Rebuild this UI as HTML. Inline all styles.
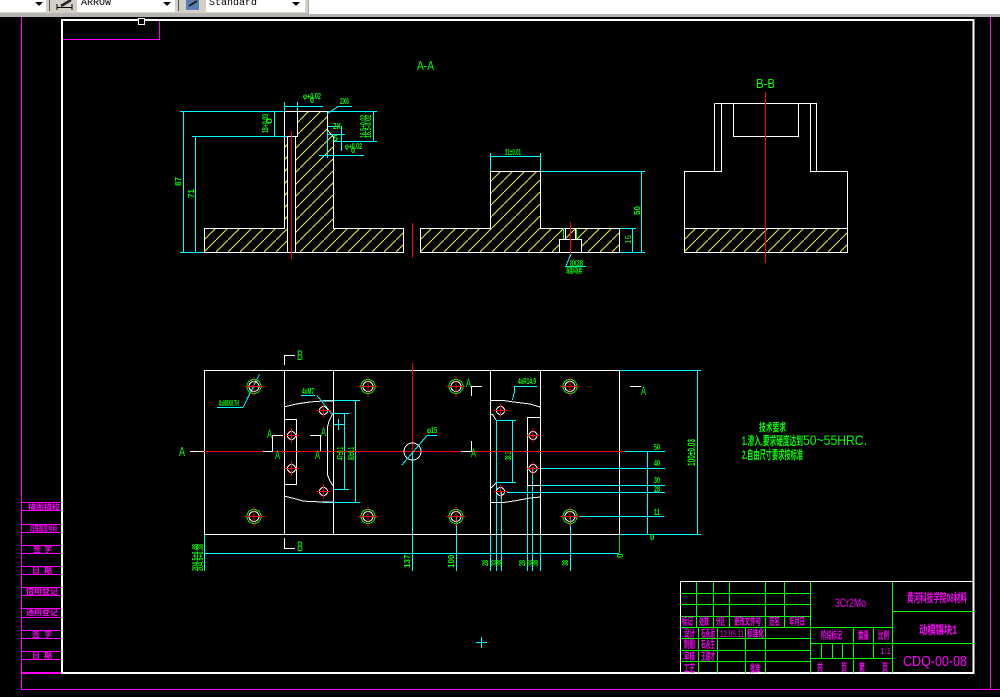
<!DOCTYPE html>
<html>
<head>
<meta charset="utf-8">
<style>
html,body{margin:0;padding:0;background:#000;width:1000px;height:697px;overflow:hidden}
svg{position:absolute;left:0;top:0;display:block}
text{font-family:"Liberation Sans","Noto Sans CJK SC",sans-serif}
.g{fill:#00ff00;font-size:11px}
.gs{fill:#00ff00;font-size:8px;font-weight:bold}
.m{fill:#ff00ff;font-size:10px;font-weight:bold}
.s{fill:#ff00ff;font-size:8px;font-weight:bold}
.mono{font-family:"Liberation Mono",monospace;font-size:10px;fill:#000}
</style>
</head>
<body>
<svg width="1000" height="697" viewBox="0 0 1000 697" xmlns="http://www.w3.org/2000/svg">
<defs>
<pattern id="h" width="12" height="12" patternUnits="userSpaceOnUse">
<path d="M0 12L12 0" stroke="#f0f040" stroke-width="1" fill="none"/>
</pattern>
<g id="big" shape-rendering="crispEdges">
<circle r="7" fill="none" stroke="#00ff00"/>
<circle r="5" fill="none" stroke="#fff"/>
<path d="M-9.500 0H9.500M0-9.500V9.500" stroke="#ff0000" fill="none"/>
</g>
<g id="small" shape-rendering="crispEdges">
<circle r="4" fill="none" stroke="#fff"/>
<path d="M-7 0H7M0-7V7" stroke="#ff0000" fill="none"/>
</g>
</defs>

<rect width="1000" height="697" fill="#000"/>

<!-- toolbar -->
<rect x="0" y="0" width="1000" height="14" fill="#fff"/>
<rect x="0" y="0" width="308" height="13" fill="#d4d0c8"/>
<rect x="308" y="0" width="1" height="14" fill="#a8a8a8"/>
<rect x="0" y="13" width="308" height="1" fill="#b8b8b0"/>
<rect x="0" y="14" width="1000" height="3" fill="#b4b4b4"/>
<rect x="0" y="0" width="46" height="12" fill="#fff"/>
<rect x="77" y="0" width="98" height="12" fill="#fff"/>
<rect x="206" y="0" width="99" height="12" fill="#fff"/>
<path d="M35 2h8l-4 4z M163 2h8l-4 4z M292 2h8l-4 4z" fill="#000"/>
<rect x="49" y="0" width="1" height="11" fill="#555"/>
<rect x="178" y="0" width="1" height="11" fill="#555"/>
<path d="M57 4V10M72 4V10M57 7.500H72" stroke="#000" fill="none" shape-rendering="crispEdges"/>
<path d="M61 6L71 0" stroke="#222" stroke-width="2.500" fill="none"/>
<rect x="186" y="0" width="13" height="10" fill="#5a7fb5"/>
<path d="M189 6L197 1" stroke="#222" stroke-width="2" fill="none"/>
<text x="81" y="5" class="mono">ARROW</text>
<text x="209" y="5" class="mono">Standard</text>

<g shape-rendering="crispEdges" fill="none">
<!-- magenta outer -->
<path d="M21.500 17V689.500H1000M990.500 17V689.500M62 39.500H159.500V20" stroke="#ff00ff"/>
<path d="M22 502.500H62M22 510.500H62M22 524.500H62M22 532.500H62M22 545.500H62M22 553.500H62M22 566.500H62M22 574.500H62M22 587.500H62M22 595.500H62M22 608.500H62M22 617.500H62M22 630.500H62M22 638.500H62M22 651.500H62M22 659.500H62" stroke="#ff00ff"/>
<rect x="22" y="672" width="40" height="2" fill="#ff00ff"/>

<!-- white frame -->
<rect x="62" y="20" width="911.500" height="653" stroke="#fff" stroke-width="2"/>
<rect x="138.500" y="18.500" width="6" height="6" stroke="#fff" fill="#000"/>

<!-- hatches -->
<path d="M204 228H284V136H287V252H204Z" fill="url(#h)"/>
<path d="M297 111H327L327 130L333 135V228H403V252H295V136H297Z" fill="url(#h)"/>
<path d="M420 228H490V171H540V228H619V252H581V239H559V252H420Z" fill="url(#h)"/>
<rect x="684" y="228" width="163" height="24" fill="url(#h)"/>

<!-- A-A section: cyan -->
<path d="M180 111.500H377M192 136.500H290M183.500 111V252M195.500 136V252M180 252.500H290M284.500 102V111M297.500 102V111M284 106.500H323M338 106.500H352M274.500 111V136M327.500 126V158M327 126.500H340M327 134.500H345M341.500 126V151M333 141.500H377M373.500 111V141M319 155.500H364" stroke="#00ffff"/>
<path d="M490.500 153V171M540.500 153V171M490 156.500H541M540 171.500H645M641.500 171V252M610 228.500H636M632.500 228V252M540 252.500H645M565 266.500H586" stroke="#00ffff"/>

<!-- A-A section: white -->
<path d="M284.500 111.500V228.500H204.500V252.500H403.500V228.500H333.500V137L327.500 130V111.500H284.500M287.500 136.500V252M287 136.500H297.500V111.500M295.500 136.500V252" stroke="#fff"/>
<path d="M420.500 252.500V228.500H490.500V171.500H540.500V228.500H619.500V252.500H420.500M559.500 252V239.500H581.500V252M565.500 228V239M575.500 228V239" stroke="#fff"/>
<path d="M563.500 228V239M576.500 228V239" stroke="#00ff00"/>
<path d="M291.500 131V259M412.500 223V258M570.500 222V257" stroke="#ff0000"/>

<!-- B-B -->
<path d="M714.500 103.500H816.500V171.500H847.500V252.500H684.500V171.500H714.500V103.500M721.500 103V171.500H714M810.500 103V171.500H817M684 228.500H848M733.500 103V136.500H798.500V103" stroke="#fff"/>
<path d="M765.500 92V263" stroke="#ff0000"/>

<!-- plan view: cyan -->
<path d="M204.500 534V571M412.500 452V571M456.500 516V571M490.500 534V571M496.500 420V571M501.500 492V571M527.500 485V571M532.500 468V571M540.500 534V571M570.500 516V571M204 553.500H619" stroke="#00ffff"/>
<path d="M323 400.500H360M323 502.500H360M355.500 401V502M333 413.500H349M333 489.500H349M344.500 413V489M338.500 419V430M333 424.500H344" stroke="#00ffff"/>
<path d="M496 420.500H516M496 482.500H516M512.500 420V482" stroke="#00ffff"/>
<path d="M625 451.500H665M540 468.500H665M540 485.500H665M507 492.500H665M577 516.500H664M647.500 451V534M619 370.500H701M619 534.500H701M697.500 370V534" stroke="#00ffff"/>
<path d="M217 407.500H243M301 395.500H315M514 386.500H537M514.500 386V393M427 435.500H437" stroke="#00ffff"/>
<path d="M619.500 534V553" stroke="#00e000"/>

<!-- plan view: white -->
<rect x="204.500" y="370.500" width="415" height="164" stroke="#fff"/>
<path d="M284.500 370V534M333.500 370V534M490.500 370V534M540.500 370V534" stroke="#fff"/>
<path d="M284.500 419.500H296.500V484.500H284.500M527.500 417.500H540M527.500 417V485M527 485.500H540" stroke="#fff"/>
<path d="M284.500 365V355.500H295M284.500 538V548.500H295M190 451.500H204M263 451.500H272.500V435.500H283M310 435.500H320.500V451.500H331M461 451.500H471.500V441M471.500 396V386.500H482M630 386.500H641" stroke="#fff"/>
<path d="M204 451.500H263M273 451.500H461M472 451.500H625M412.500 363V451" stroke="#ff0000"/>
</g>

<!-- slanted lines & curves -->
<g fill="none" stroke="#fff" shape-rendering="crispEdges">
<path d="M284 407L296 404L303 403L310 402L323 401H333"/>
<path d="M284 496L296 499L303 501L310 501.500L323 502H333"/>
<path d="M333 413L329 421L327.500 427V475L330 481L333 486"/>
<path d="M490 400.500H503L514 402L522 403L530 404L540 407"/>
<path d="M490 502.500H503L514 501L522 499.500L530 498L540 497"/>
<path d="M490 414L493 415L496 420M496 483L490 489"/>
<circle cx="412.500" cy="451.500" r="8.500"/>
</g>
<g fill="none" stroke="#00ffff" shape-rendering="crispEdges">
<path d="M243 407.500L259.500 374"/>
<path d="M317 395.500L332 414"/>
<path d="M427 435.500L402 465"/>
<path d="M514 393L512.500 400"/>
<path d="M338 106.500L327 114"/>
<path d="M571 254L566 266"/>
</g>

<use href="#big" x="254" y="386.500"/>
<use href="#big" x="368" y="386.500"/>
<use href="#big" x="456" y="386.500"/>
<use href="#big" x="570" y="386.500"/>
<use href="#big" x="254" y="516.500"/>
<use href="#big" x="368" y="516.500"/>
<use href="#big" x="456" y="516.500"/>
<use href="#big" x="570" y="516.500"/>
<use href="#small" x="291.500" y="435.500"/>
<use href="#small" x="291.500" y="468.500"/>
<use href="#small" x="323.500" y="410.500"/>
<use href="#small" x="323.500" y="491.500"/>
<use href="#small" x="500.500" y="410.500"/>
<use href="#small" x="500.500" y="491.500"/>
<use href="#small" x="533" y="435.500"/>
<use href="#small" x="533" y="468.500"/>

<!-- title block lines -->
<g shape-rendering="crispEdges" fill="none">
<path d="M681 593.500H810M681 604.500H810M681 616.500H810M681 627.500H892M681 638.500H810M681 650.500H810M681 661.500H810M810 643.500H974M810 658.500H892M892 611.500H974M892 643.500H974" stroke="#00ff00"/>
<path d="M696.500 582V627M713.500 582V627M729.500 582V627M765.500 582V673M784.500 582V627M810.500 582V673M892.500 582V673M698.500 627V673M717.500 627V673M745.500 627V673M853.500 627V673M873.500 627V658M821.500 643V658M832.500 643V658M842.500 643V658" stroke="#00ff00"/>
<path d="M680.500 673V581.500H974" stroke="#fff"/>
<path d="M481.500 637V648M476 642.500H487" stroke="#00ffff"/>
</g>

<!-- green labels -->
<text x="417" y="70" class="g" style="font-size:13px" textLength="17" lengthAdjust="spacingAndGlyphs">A-A</text>
<text x="756" y="88" class="g" style="font-size:13px" textLength="19" lengthAdjust="spacingAndGlyphs">B-B</text>
<text x="297" y="360" class="g" style="font-size:14px" textLength="6" lengthAdjust="spacingAndGlyphs">B</text>
<text x="297" y="551" class="g" style="font-size:14px" textLength="6" lengthAdjust="spacingAndGlyphs">B</text>
<text x="179" y="456" class="g" style="font-size:13px" textLength="6" lengthAdjust="spacingAndGlyphs">A</text>
<text x="267" y="438" class="g" style="font-size:12px" textLength="5" lengthAdjust="spacingAndGlyphs">A</text>
<text x="321" y="436" class="g" style="font-size:12px" textLength="5" lengthAdjust="spacingAndGlyphs">A</text>
<text x="275" y="459" class="g" style="font-size:12px" textLength="5" lengthAdjust="spacingAndGlyphs">A</text>
<text x="315" y="459" class="g" style="font-size:12px" textLength="5" lengthAdjust="spacingAndGlyphs">A</text>
<text x="466" y="387" class="g" style="font-size:12px" textLength="5" lengthAdjust="spacingAndGlyphs">A</text>
<text x="641" y="395" class="g" style="font-size:12px" textLength="5" lengthAdjust="spacingAndGlyphs">A</text>
<text x="471" y="457" class="g" style="font-size:12px" textLength="5" lengthAdjust="spacingAndGlyphs">A</text>

<!-- A-A dims -->
<text x="303" y="99" class="gs" textLength="18" lengthAdjust="spacingAndGlyphs">φ+0.02</text>
<text x="310" y="103" class="gs" textLength="4" lengthAdjust="spacingAndGlyphs">0</text>
<text x="340" y="104" class="gs" textLength="9" lengthAdjust="spacingAndGlyphs">2X6</text>
<text x="333" y="129" class="gs" textLength="8" lengthAdjust="spacingAndGlyphs">2X</text>
<text x="333" y="141" class="gs" textLength="5" lengthAdjust="spacingAndGlyphs">5</text>
<text x="345" y="149" class="gs" textLength="17" lengthAdjust="spacingAndGlyphs">φ+0.02</text>
<text x="351" y="153" class="gs" textLength="4" lengthAdjust="spacingAndGlyphs">0</text>
<text x="505" y="155" class="gs" textLength="16" lengthAdjust="spacingAndGlyphs">31±0.01</text>
<text transform="translate(181,186) rotate(-90)" class="gs">87</text>
<text transform="translate(194,198) rotate(-90)" class="gs">71</text>
<text transform="translate(268,133) rotate(-90)" class="gs" textLength="19" lengthAdjust="spacingAndGlyphs">18+0.03</text>
<text transform="translate(272,124) rotate(-90)" class="gs" textLength="6" lengthAdjust="spacingAndGlyphs">0</text>
<text transform="translate(366,138) rotate(-90)" class="gs" textLength="23" lengthAdjust="spacingAndGlyphs">16.5+0.02</text>
<text transform="translate(371,138) rotate(-90)" class="gs" textLength="23" lengthAdjust="spacingAndGlyphs">16.5-0.02</text>
<text transform="translate(640,215) rotate(-90)" class="gs">50</text>
<text transform="translate(631,244) rotate(-90)" class="g" style="font-size:8px">15</text>
<text x="570" y="266" class="gs" textLength="13" lengthAdjust="spacingAndGlyphs">8X38</text>
<text x="566" y="273" class="gs" textLength="16" lengthAdjust="spacingAndGlyphs">深度6攻丝</text>

<!-- plan dims -->
<text x="219" y="406" class="gs" textLength="20" lengthAdjust="spacingAndGlyphs">8xM8X0.7H</text>
<text x="302" y="394" class="gs" textLength="12" lengthAdjust="spacingAndGlyphs">4xM7</text>
<text x="427" y="433" class="gs" textLength="10" lengthAdjust="spacingAndGlyphs">φ15</text>
<text x="518" y="384" class="gs" textLength="18" lengthAdjust="spacingAndGlyphs">4xR14.9</text>
<text transform="translate(343,460) rotate(-90)" class="gs" textLength="13" lengthAdjust="spacingAndGlyphs">47±0.1</text>
<text transform="translate(354,460) rotate(-90)" class="gs" textLength="13" lengthAdjust="spacingAndGlyphs">80±0.1</text>
<text transform="translate(511,460) rotate(-90)" class="gs" textLength="8" lengthAdjust="spacingAndGlyphs">38.1</text>
<text x="654" y="450" class="gs" textLength="6" lengthAdjust="spacingAndGlyphs">50</text>
<text x="654" y="466" class="gs" textLength="6" lengthAdjust="spacingAndGlyphs">40</text>
<text x="654" y="483" class="gs" textLength="6" lengthAdjust="spacingAndGlyphs">30</text>
<text x="654" y="492" class="gs" textLength="6" lengthAdjust="spacingAndGlyphs">28</text>
<text x="654" y="515" class="gs" textLength="6" lengthAdjust="spacingAndGlyphs">11</text>
<text x="650" y="540" class="gs">0</text>
<text transform="translate(695,466) rotate(-90)" class="g" style="font-weight:bold;font-size:11px" textLength="27" lengthAdjust="spacingAndGlyphs">100±0.03</text>
<text transform="translate(198,571) rotate(-90)" class="gs" textLength="27" lengthAdjust="spacingAndGlyphs">204.5±0.48</text>
<text transform="translate(203,571) rotate(-90)" class="gs" textLength="27" lengthAdjust="spacingAndGlyphs">204.5+0.38</text>
<text transform="translate(410,568) rotate(-90)" class="gs">137</text>
<text transform="translate(454,568) rotate(-90)" class="gs">100</text>
<text transform="translate(488,566) rotate(-90)" class="gs" textLength="6" lengthAdjust="spacingAndGlyphs">28</text>
<text transform="translate(497,566) rotate(-90)" class="gs" textLength="6" lengthAdjust="spacingAndGlyphs">33</text>
<text transform="translate(502,566) rotate(-90)" class="gs" textLength="6" lengthAdjust="spacingAndGlyphs">38</text>
<text transform="translate(525,566) rotate(-90)" class="gs" textLength="6" lengthAdjust="spacingAndGlyphs">28</text>
<text transform="translate(533,566) rotate(-90)" class="gs" textLength="6" lengthAdjust="spacingAndGlyphs">33</text>
<text transform="translate(538,566) rotate(-90)" class="gs" textLength="6" lengthAdjust="spacingAndGlyphs">38</text>
<text transform="translate(568,566) rotate(-90)" class="gs" textLength="6" lengthAdjust="spacingAndGlyphs">38</text>
<text transform="translate(623,558) rotate(-90)" class="gs">0</text>

<!-- tech note -->
<text x="759" y="431" class="g" style="font-size:11px;font-weight:bold" textLength="27" lengthAdjust="spacingAndGlyphs">技术要求</text>
<text x="742" y="445" class="g" style="font-size:12px;font-weight:bold" textLength="61" lengthAdjust="spacingAndGlyphs">1.渗入,要求硬度达到</text>
<text x="803" y="445" class="g" style="font-size:14px" textLength="64" lengthAdjust="spacingAndGlyphs">50~55HRC.</text>
<text x="742" y="459" class="g" style="font-size:12px;font-weight:bold" textLength="61" lengthAdjust="spacingAndGlyphs">2.自由尺寸要求按标准</text>

<!-- title block text -->
<text x="835" y="607" fill="#ff00ff" style="font-size:12px" textLength="31" lengthAdjust="spacingAndGlyphs">3Cr2Mo</text>
<text x="907" y="602" class="m" style="font-size:12px" textLength="60" lengthAdjust="spacingAndGlyphs">黄河科技学院08材料</text>
<text x="919" y="634" class="m" style="font-size:12px" textLength="38" lengthAdjust="spacingAndGlyphs">动模镶块1</text>
<text x="903" y="666" fill="#ff00ff" style="font-size:15px" textLength="64" lengthAdjust="spacingAndGlyphs">CDQ-00-08</text>

<text x="682" y="625" class="m" textLength="11" lengthAdjust="spacingAndGlyphs">标记</text>
<text x="699" y="625" class="m" textLength="10" lengthAdjust="spacingAndGlyphs">处数</text>
<text x="716" y="625" class="m" textLength="9" lengthAdjust="spacingAndGlyphs">分区</text>
<text x="734" y="625" class="m" textLength="27" lengthAdjust="spacingAndGlyphs">更改文件号</text>
<text x="769" y="625" class="m" textLength="11" lengthAdjust="spacingAndGlyphs">签名</text>
<text x="789" y="625" class="m" textLength="16" lengthAdjust="spacingAndGlyphs">年月日</text>

<text x="684" y="637" class="m" textLength="11" lengthAdjust="spacingAndGlyphs">设计</text>
<text x="701" y="637" class="m" textLength="14" lengthAdjust="spacingAndGlyphs">石永运</text>
<text x="720" y="637" fill="#ff00ff" style="font-size:9px" textLength="24" lengthAdjust="spacingAndGlyphs">12.05.11</text>
<text x="747" y="637" class="m" textLength="17" lengthAdjust="spacingAndGlyphs">标准化</text>
<text x="684" y="648" class="m" textLength="11" lengthAdjust="spacingAndGlyphs">制图</text>
<text x="701" y="648" class="m" textLength="14" lengthAdjust="spacingAndGlyphs">石永生</text>
<text x="684" y="660" class="m" textLength="11" lengthAdjust="spacingAndGlyphs">审核</text>
<text x="701" y="660" class="m" textLength="14" lengthAdjust="spacingAndGlyphs">王建才</text>
<text x="684" y="672" class="m" textLength="11" lengthAdjust="spacingAndGlyphs">工艺</text>
<text x="750" y="672" class="m" textLength="10" lengthAdjust="spacingAndGlyphs">批准</text>

<text x="821" y="639" class="m" textLength="21" lengthAdjust="spacingAndGlyphs">阶段标记</text>
<text x="858" y="639" class="m" textLength="11" lengthAdjust="spacingAndGlyphs">重量</text>
<text x="878" y="639" class="m" textLength="11" lengthAdjust="spacingAndGlyphs">比例</text>
<text x="880" y="654" fill="#ff00ff" style="font-size:8px">1:1</text>
<text x="817" y="671" class="m" textLength="6" lengthAdjust="spacingAndGlyphs">共</text>
<text x="841" y="671" class="m" textLength="6" lengthAdjust="spacingAndGlyphs">页</text>
<text x="859" y="671" class="m" textLength="6" lengthAdjust="spacingAndGlyphs">第</text>
<text x="882" y="671" class="m" textLength="6" lengthAdjust="spacingAndGlyphs">页</text>

<!-- left stub text -->
<text x="28" y="510" class="s" textLength="32" lengthAdjust="spacing">描图描校</text>
<text x="30" y="531" class="s" textLength="27" lengthAdjust="spacingAndGlyphs">旧底图总号码</text>
<text x="33" y="552" class="s" textLength="19" lengthAdjust="spacing">签字</text>
<text x="32" y="573" class="s" textLength="20" lengthAdjust="spacing">日期</text>
<text x="26" y="594" class="s" textLength="32" lengthAdjust="spacing">借用登记</text>
<text x="26" y="615" class="s" textLength="32" lengthAdjust="spacing">通用登记</text>
<text x="32" y="637" class="s" textLength="20" lengthAdjust="spacing">签字</text>
<text x="32" y="658" class="s" textLength="20" lengthAdjust="spacing">日期</text>
</svg>
</body>
</html>
